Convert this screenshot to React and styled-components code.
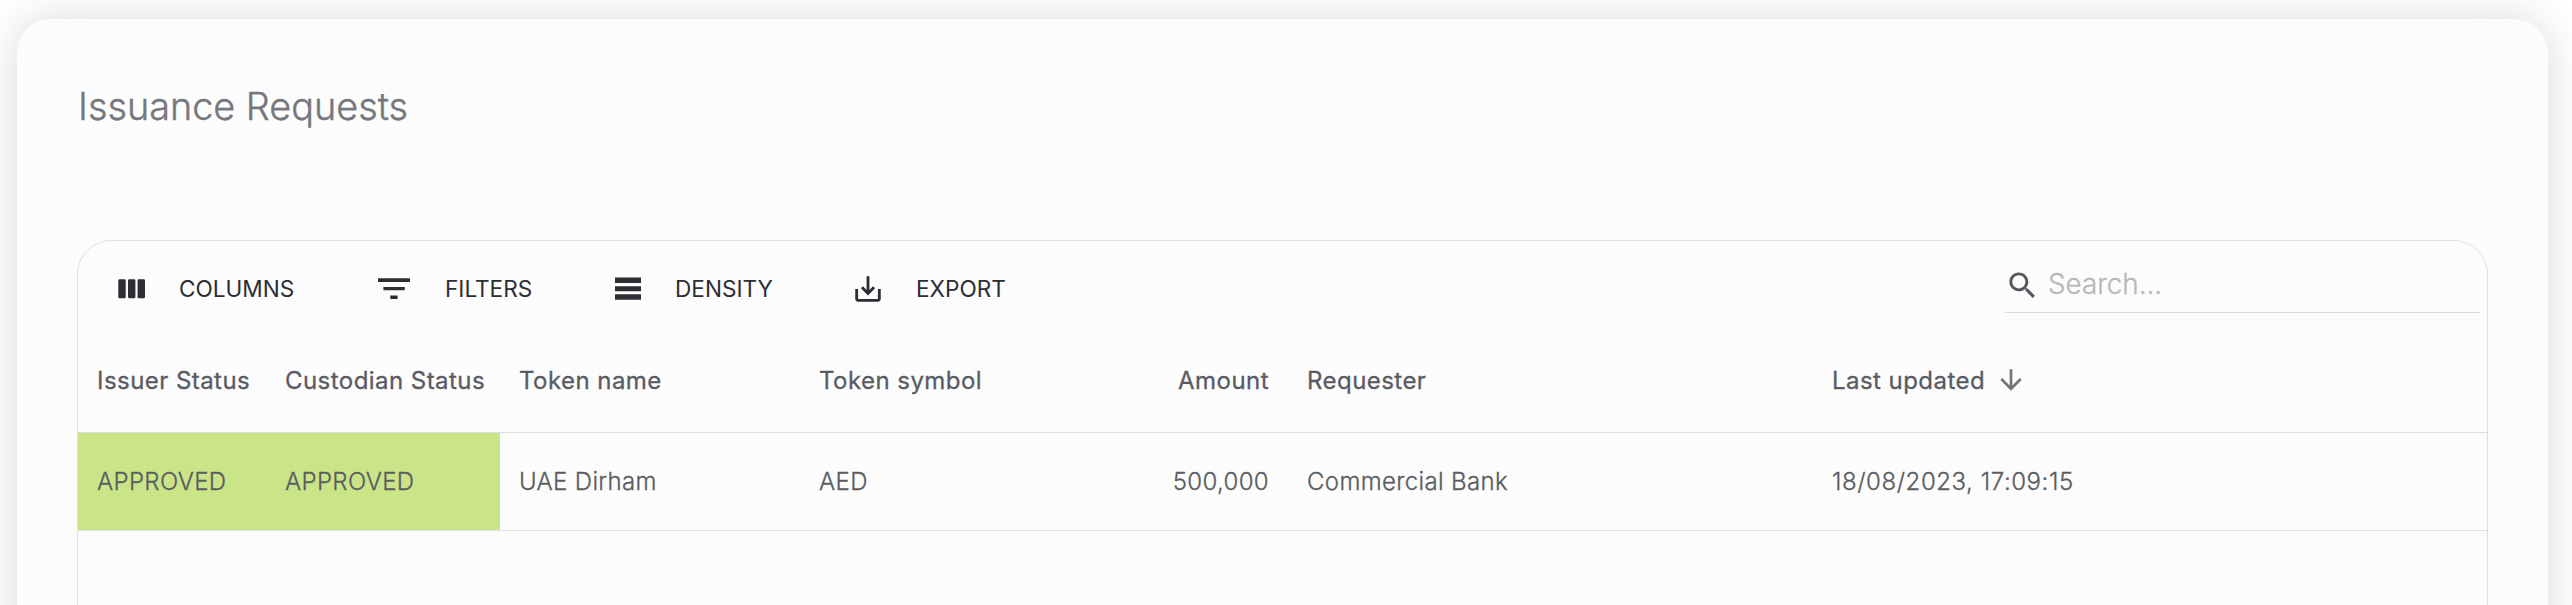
import React from 'react';
import styled, { createGlobalStyle } from 'styled-components';

const GlobalStyle = createGlobalStyle`
  * { box-sizing: border-box; }
  body { margin: 0; background: #ffffff; font-family: Inter, "Liberation Sans", sans-serif; }
`;

const Page = styled.div`
  height: 605px;
  padding: 19px 24px 0 17px;
  overflow: hidden;
`;

const Card = styled.section`
  height: 700px;
  padding: 59px 60px 0;
  border-radius: 34px;
  background: #fcfcfc;
  box-shadow: 0 0 45px rgba(0, 0, 0, 0.15);
`;

const Title = styled.h1`
  margin: 0 0 106px;
  height: 56px;
  padding-left: 1px;
  line-height: 56px;
  font-size: 37.8px;
  font-weight: 300;
  color: #76777c;
  -webkit-text-stroke: 0.4px currentColor;
`;

const DataGrid = styled.div`
  height: 520px;
  border: 1px solid #e0e0e0;
  border-radius: 34px;
`;

const Toolbar = styled.div`
  display: flex;
  justify-content: space-between;
  height: 87px;
  padding: 0 7px 0 34px;
`;

const Actions = styled.div`
  display: flex;
  align-items: center;
  height: 95px;
`;

const ActionButton = styled.button`
  display: flex;
  align-items: center;
  gap: ${(p) => p.$gap}px;
  width: ${(p) => p.$width}px;
  padding: 0;
  border: 0;
  background: none;
  color: #2d2d34;
  font-family: inherit;
  font-size: 22.6px;
  font-weight: 400;
  text-align: left;
`;

const Icon = styled.svg`
  display: block;
  flex: none;
  width: ${(p) => p.$size}px;
  height: ${(p) => p.$size}px;
  fill: currentColor;
`;

const SearchField = styled.label`
  display: flex;
  align-items: center;
  width: 475px;
  height: 72px;
  padding-top: 14px;
  border-bottom: 1px solid #d9d9da;
  color: #55575e;
`;

const SearchIcon = styled(Icon)`
  margin-top: 3px;
`;

const SearchInput = styled.input`
  flex: 1;
  min-width: 0;
  margin-left: 8px;
  padding: 0;
  border: 0;
  outline: 0;
  background: none;
  font-family: inherit;
  font-size: 27.8px;
  font-weight: 300;
  color: #55575e;
  &::placeholder {
    color: #b7b7b9;
    opacity: 1;
    -webkit-text-stroke: 0.3px #b7b7b9;
  }
`;

const Row = styled.div`
  display: grid;
  grid-template-columns: 188px 234px 300px 488px 525px 1fr;
  height: ${(p) => (p.$header ? 105 : 98)}px;
  border-bottom: 1px solid #dedfe0;
  color: ${(p) => (p.$header ? '#595b63' : '#5a5c62')};
  font-size: 24px;
  font-weight: ${(p) => (p.$header ? 400 : 300)};
  letter-spacing: ${(p) => (p.$header ? 0.45 : 0.35)}px;
  -webkit-text-stroke: 0.3px currentColor;
`;

const Cell = styled.div`
  display: flex;
  align-items: center;
  gap: 10px;
  padding: 0 19px;
  white-space: nowrap;
  background: ${(p) => (p.$approved ? '#cae587' : 'transparent')};
`;

const SplitCell = styled(Cell)`
  justify-content: space-between;
`;

const DateCell = styled(Cell)`
  letter-spacing: 0.55px;
`;

const SortIcon = styled(Icon)`
  color: #757575;
`;

const ColumnsIcon = () => (
  <Icon $size={34} viewBox="0 0 34 34">
    <rect x="6.3" y="7.2" width="7.4" height="19" rx="1.2" />
    <rect x="16" y="7.2" width="7.4" height="19" rx="1.2" />
    <rect x="25.6" y="7.2" width="7.4" height="19" rx="1.2" />
  </Icon>
);

const FilterIcon = () => (
  <Icon $size={34} viewBox="0 0 34 34">
    <path d="M1 6.2h32v3.7H1zM6.4 15h21.4v3.2H6.4zM13.3 23.4h7.3v3.7h-7.3z" />
  </Icon>
);

const DensityIcon = () => (
  <Icon $size={34} viewBox="0 0 34 34">
    <path d="M4 5.4h26v5.6H4zM4 14.2h26v5H4zM4 22.3h26v5.5H4z" />
  </Icon>
);

const ExportIcon = () => (
  <Icon $size={34} viewBox="0 0 24 24">
    <path d="M19 12v7H5v-7H3v7c0 1.1.9 2 2 2h14c1.1 0 2-.9 2-2v-7h-2zm-6 .67l2.59-2.58L17 11.5l-5 5-5-5 1.41-1.41L11 12.67V3h2z" />
  </Icon>
);

const actions = [
  { label: 'COLUMNS', icon: ColumnsIcon, width: 265, gap: 33 },
  { label: 'FILTERS', icon: FilterIcon, width: 234, gap: 34 },
  { label: 'DENSITY', icon: DensityIcon, width: 240, gap: 30 },
  { label: 'EXPORT', icon: ExportIcon, width: 170, gap: 31 },
];

export default function App() {
  return (
    <>
      <GlobalStyle />
      <Page>
        <Card>
          <Title>Issuance Requests</Title>
          <DataGrid>
            <Toolbar>
              <Actions>
                {actions.map(({ label, icon: ActionIcon, width, gap }) => (
                  <ActionButton key={label} $width={width} $gap={gap}>
                    <ActionIcon />
                    {label}
                  </ActionButton>
                ))}
              </Actions>
              <SearchField>
                <SearchIcon $size={35} viewBox="0 0 24 24">
                  <path d="M15.5 14h-.79l-.28-.27C15.41 12.59 16 11.11 16 9.5 16 5.91 13.09 3 9.5 3S3 5.91 3 9.5 5.91 16 9.5 16c1.61 0 3.09-.59 4.23-1.57l.27.28v.79l5 4.99L20.49 19l-4.99-5zm-6 0C7.01 14 5 11.99 5 9.5S7.01 5 9.5 5 14 7.01 14 9.5 11.99 14 9.5 14z" />
                </SearchIcon>
                <SearchInput placeholder="Search..." />
              </SearchField>
            </Toolbar>
            <Row $header>
              <Cell>Issuer Status</Cell>
              <Cell>Custodian Status</Cell>
              <Cell>Token name</Cell>
              <SplitCell><span>Token symbol</span><span>Amount</span></SplitCell>
              <Cell>Requester</Cell>
              <Cell>
                Last updated
                <SortIcon $size={32} viewBox="0 0 24 24">
                  <path d="M20 12l-1.41-1.41L13 16.17V4h-2v12.17l-5.58-5.59L4 12l8 8 8-8z" />
                </SortIcon>
              </Cell>
            </Row>
            <Row>
              <Cell $approved>APPROVED</Cell>
              <Cell $approved>APPROVED</Cell>
              <Cell>UAE Dirham</Cell>
              <SplitCell><span>AED</span><span>500,000</span></SplitCell>
              <Cell>Commercial Bank</Cell>
              <DateCell>18/08/2023, 17:09:15</DateCell>
            </Row>
          </DataGrid>
        </Card>
      </Page>
    </>
  );
}
